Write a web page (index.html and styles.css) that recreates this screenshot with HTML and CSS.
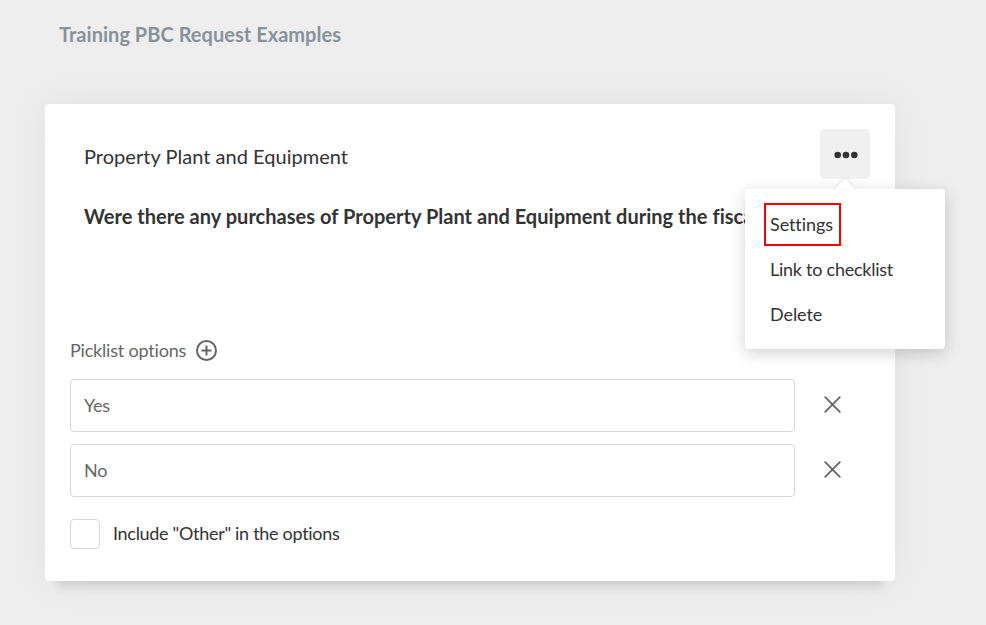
FILE: index.html
```html
<!DOCTYPE html>
<html lang="en">
<head>
<meta charset="utf-8">
<title>Training PBC Request Examples</title>
<link rel="stylesheet" href="styles.css">
</head>
<body>
<h1 class="page-title">Training PBC Request Examples</h1>
<main class="card">
  <div class="name">Property Plant and Equipment</div>
  <div class="question">Were there any purchases of Property Plant and Equipment during the fisca</div>
  <div class="picklist-head">
    <span class="label">Picklist options</span>
    <svg class="add" width="21" height="21" viewBox="0 0 21 21"><circle cx="10.500" cy="10.500" r="9.500"/><path d="M10.500 5.500v10M5.500 10.500h10"/></svg>
  </div>
  <div class="option"><div class="field">Yes</div><svg class="remove" width="17" height="17" viewBox="0 0 17 17"><path d="M1.200 1.200l14.600 14.600M15.800 1.200l-14.600 14.600"/></svg></div>
  <div class="option"><div class="field">No</div><svg class="remove" width="17" height="17" viewBox="0 0 17 17"><path d="M1.200 1.200l14.600 14.600M15.800 1.200l-14.600 14.600"/></svg></div>
  <div class="other"><span class="checkbox"></span><span class="other-label">Include "Other" in the options</span></div>
  <div class="more"><svg width="24" height="8" viewBox="0 0 24 8"><circle cx="3.700" cy="4" r="3.300"/><circle cx="12" cy="4" r="3.300"/><circle cx="20.300" cy="4" r="3.300"/></svg></div>
  <div class="menu">
    <div class="item active">Settings</div>
    <div class="item link">Link to checklist</div>
    <div class="item">Delete</div>
  </div>
</main>
</body>
</html>
```
FILE: styles.css
```css
* { box-sizing: border-box; }
body { margin: 0; height: 625px; overflow: hidden; background: #eee; font-family: Lato, sans-serif; font-size: 18px; color: #333; padding: 22px 0 0 45px; font-variant-ligatures: none; }
.page-title { margin: 0 0 58px 14px; font-size: 20px; line-height: 24px; font-weight: 700; letter-spacing: .03px; color: #87929a; }
.card { position: relative; width: 850px; height: 477px; padding: 40px 25px 0; background: #fff; border-radius: 4px; box-shadow: 0 18px 8px -12px rgba(0,0,0,.1), 0 0 40px rgba(0,0,0,.06); }
.name { margin-left: 14px; font-size: 20px; line-height: 24px; letter-spacing: .03px; }
.question { margin: 36px 0 0 14px; white-space: nowrap; font-size: 20px; line-height: 24px; font-weight: 700; letter-spacing: .025px; }
.picklist-head { display: flex; align-items: center; gap: 9px; margin-top: 110px; height: 24px; color: #666; }
.label { width: 117px; white-space: nowrap; letter-spacing: -.19px; }
.add, .remove { flex: none; fill: none; stroke: #666; stroke-width: 2; }
.add { margin-top: 1px; }
.option { display: flex; align-items: center; gap: 29px; margin-top: 12px; }
.picklist-head + .option { margin-top: 17px; }
.remove { margin-bottom: 2px; stroke-width: 1.8; stroke-linecap: round; }
.field { width: 725px; height: 53px; padding: 0 13px; line-height: 51px; letter-spacing: -.2px; color: #666; border: 1px solid #d3d7df; border-radius: 4px; }
.other { display: flex; align-items: center; gap: 13px; margin-top: 22px; }
.other-label { margin-bottom: 2px; letter-spacing: -.3px; }
.checkbox { width: 30px; height: 30px; border: 1px solid #d3d7df; border-radius: 4px; }
.more { position: absolute; top: 25px; left: 775px; width: 50px; height: 50px; display: flex; align-items: center; justify-content: center; padding: 1px 0 0 1px; background: #f0f0f0; border-radius: 5px; fill: #333; }
.menu { position: absolute; top: 85px; left: 700px; width: 200px; height: 160px; padding: 14px 19px; background: #fff; border-radius: 4px; box-shadow: 0 4px 16px rgba(0,0,0,.18); }
.menu::before { content: ""; position: absolute; top: -10px; left: 90px; border: 10px solid transparent; border-top: 0; border-bottom-color: #fff; filter: drop-shadow(0 -1px 2px rgba(0,0,0,.1)); }
.item { height: 45px; line-height: 45px; padding-left: 6px; letter-spacing: -.08px; }
.active { width: 77px; height: 43px; margin-bottom: 1px; padding-left: 4px; line-height: 39px; border: 2px solid #f00; }
.link { letter-spacing: -.25px; }
```
